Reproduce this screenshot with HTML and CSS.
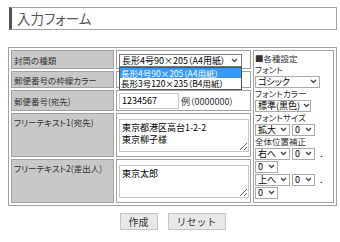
FILE: index.html
```html
<!DOCTYPE html>
<html lang="ja">
<head>
<meta charset="UTF-8">
<meta name="viewport" content="width=device-width, initial-scale=1.0">
<title>入力フォーム</title>
<link rel="stylesheet" href="styles.css">
</head>
<body>
    <h1 class="page_title">入力フォーム</h1>

    <form class="input_form">
        <table class="form_table">
            <colgroup>
                <col class="col_label">
                <col class="col_input">
                <col class="col_side">
            </colgroup>
            <tr class="row_type">
                <th>封筒の種類</th>
                <td>
                    <div class="sel_wrap">
                        <span class="sel sel_type">長形4号90×205（A4用紙）<svg class="chev" width="7" height="5" viewBox="0 0 7 5"><polyline points="1,1 3.5,3.5 6,1" fill="none" stroke="#444" stroke-width="1.3"/></svg></span>
                        <ul class="sel_list">
                            <li class="on">長形4号90×205（A4用紙）</li>
                            <li>長形3号120×235（B4用紙）</li>
                        </ul>
                    </div>
                </td>
                <td rowspan="5" class="side">
                    <div class="side_line">■各種設定</div>
                    <div class="side_line">フォント</div>
                    <div class="side_sel">
                        <span class="sel w65">ゴシック<svg class="chev" width="7" height="5" viewBox="0 0 7 5"><polyline points="1,1 3.5,3.5 6,1" fill="none" stroke="#444" stroke-width="1.3"/></svg></span>
                    </div>
                    <div class="side_line">フォントカラー</div>
                    <div class="side_sel">
                        <span class="sel w56">標準(黒色)<svg class="chev" width="7" height="5" viewBox="0 0 7 5"><polyline points="1,1 3.5,3.5 6,1" fill="none" stroke="#444" stroke-width="1.3"/></svg></span>
                    </div>
                    <div class="side_line">フォントサイズ</div>
                    <div class="side_sel">
                        <span class="sel w35">拡大<svg class="chev" width="7" height="5" viewBox="0 0 7 5"><polyline points="1,1 3.5,3.5 6,1" fill="none" stroke="#444" stroke-width="1.3"/></svg></span>
                        <span class="sel w22">0<svg class="chev" width="7" height="5" viewBox="0 0 7 5"><polyline points="1,1 3.5,3.5 6,1" fill="none" stroke="#444" stroke-width="1.3"/></svg></span>
                    </div>
                    <div class="side_line">全体位置補正</div>
                    <div class="side_sel">
                        <span class="sel w35">右へ<svg class="chev" width="7" height="5" viewBox="0 0 7 5"><polyline points="1,1 3.5,3.5 6,1" fill="none" stroke="#444" stroke-width="1.3"/></svg></span>
                        <span class="sel w22">0<svg class="chev" width="7" height="5" viewBox="0 0 7 5"><polyline points="1,1 3.5,3.5 6,1" fill="none" stroke="#444" stroke-width="1.3"/></svg></span>
                        <span class="dot">.</span>
                    </div>
                    <div class="side_sel">
                        <span class="sel w22">0<svg class="chev" width="7" height="5" viewBox="0 0 7 5"><polyline points="1,1 3.5,3.5 6,1" fill="none" stroke="#444" stroke-width="1.3"/></svg></span>
                    </div>
                    <div class="side_sel">
                        <span class="sel w35">上へ<svg class="chev" width="7" height="5" viewBox="0 0 7 5"><polyline points="1,1 3.5,3.5 6,1" fill="none" stroke="#444" stroke-width="1.3"/></svg></span>
                        <span class="sel w22">0<svg class="chev" width="7" height="5" viewBox="0 0 7 5"><polyline points="1,1 3.5,3.5 6,1" fill="none" stroke="#444" stroke-width="1.3"/></svg></span>
                        <span class="dot">.</span>
                    </div>
                    <div class="side_sel">
                        <span class="sel w22">0<svg class="chev" width="7" height="5" viewBox="0 0 7 5"><polyline points="1,1 3.5,3.5 6,1" fill="none" stroke="#444" stroke-width="1.3"/></svg></span>
                    </div>
                </td>
            </tr>
            <tr class="row_color">
                <th>郵便番号の枠線カラー</th>
                <td></td>
            </tr>
            <tr class="row_zip">
                <th>郵便番号(宛先)</th>
                <td>
                    <input type="text" class="zip_input" value="1234567">
                    <span class="zip_hint">例（0000000）</span>
                </td>
            </tr>
            <tr class="row_free">
                <th class="top">フリーテキスト1(宛先)</th>
                <td>
                    <textarea class="free_text">東京都港区高台1-2-2
東京柳子様</textarea>
                </td>
            </tr>
            <tr class="row_free">
                <th class="top">フリーテキスト2(差出人)</th>
                <td>
                    <textarea class="free_text">東京太郎</textarea>
                </td>
            </tr>
        </table>

        <div class="buttons">
            <button type="button" class="btn">作成</button>
            <button type="reset" class="btn">リセット</button>
        </div>
    </form>
</body>
</html>
```

FILE: styles.css
```css
body {
    margin: 0;
    padding: 7px 3px 0 8px;
    font-family: "Noto Sans CJK JP", sans-serif;
    font-feature-settings: "palt";
    color: #333;
    background: #fff;
}
.page_title {
    margin: 0 0 17px 1px;
    height: 21px;
    line-height: 21px;
    border: 1px solid #a0a0a0;
    border-left: 3px solid #555;
    padding-left: 5px;
    font-size: 13.5px;
    font-weight: normal;
    color: #555;
}
.form_table {
    width: 329px;
    table-layout: fixed;
    border: 1px solid #a0a0a0;
    border-spacing: 2px;
    font-size: 8.5px;
}
.col_label {
    width: 103px;
}
.col_input {
    width: 135px;
}
.form_table th,
.form_table td {
    border: 1px solid #a0a0a0;
    padding: 0 2px;
    vertical-align: middle;
}
.form_table th {
    background-color: #c8c8c8;
    font-weight: normal;
    text-align: left;
    color: #333;
    white-space: nowrap;
}
.form_table th.top {
    vertical-align: top;
    padding-top: 2px;
}
.row_type {
    height: 19px;
}
.row_color {
    height: 17px;
}
.row_zip {
    height: 21px;
}
.row_free {
    height: 44px;
}
.form_table td.side {
    vertical-align: top;
    padding: 2px 1px 0 1px;
}
.side_line {
    height: 11px;
    line-height: 11px;
    white-space: nowrap;
}
.side_sel {
    display: flex;
    align-items: center;
    gap: 2px;
    height: 13px;
}
.dot {
    margin-left: 3px;
    font-size: 9px;
    color: #000;
}
.sel {
    display: inline-flex;
    align-items: center;
    justify-content: space-between;
    box-sizing: border-box;
    height: 12px;
    padding: 0 2px 0 2px;
    border: 1px solid #a9a9a9;
    background: #fff;
    color: #000;
    font-size: 9px;
    white-space: nowrap;
    vertical-align: middle;
}
.chev {
    flex: none;
    margin-left: 3px;
}
.sel_wrap {
    position: relative;
}
.sel_type {
    width: 123px;
    height: 13px;
    padding-right: 3px;
    border-color: #7a7a7a;
}
.w65 {
    width: 65px;
}
.w56 {
    width: 56px;
}
.w35 {
    width: 35px;
}
.w22 {
    width: 23px;
}
.sel_list {
    position: absolute;
    top: 100%;
    left: 0;
    z-index: 2;
    width: 121px;
    margin: 0;
    padding: 0;
    list-style: none;
    border: 1px solid #555;
    background: #fff;
    font-size: 8.5px;
    color: #000;
}
.sel_list li {
    height: 10.5px;
    line-height: 10.5px;
    padding-left: 1px;
    white-space: nowrap;
}
.sel_list li.on {
    background-color: #3399ff;
    color: #fff;
}
.zip_input {
    box-sizing: border-box;
    width: 60px;
    height: 16px;
    padding: 0 2px;
    border: 1px solid #c8c8c8;
    font-family: inherit;
    font-size: 9px;
    color: #000;
    vertical-align: middle;
}
.zip_hint {
    font-size: 9px;
    vertical-align: middle;
}
.free_text {
    display: block;
    box-sizing: border-box;
    width: 130px;
    height: 33px;
    margin: 0;
    padding: 2px;
    border: 1px solid #c8c8c8;
    font-family: inherit;
    font-feature-settings: "palt";
    font-size: 9px;
    line-height: 12px;
    color: #000;
}
.buttons {
    display: flex;
    justify-content: center;
    gap: 10px;
    margin-top: 7px;
}
.btn {
    height: 17px;
    padding: 0 8px;
    border: 1px solid #c5c5c5;
    background-color: #e8e8e8;
    font-family: inherit;
    font-size: 10px;
    color: #333;
}
```
